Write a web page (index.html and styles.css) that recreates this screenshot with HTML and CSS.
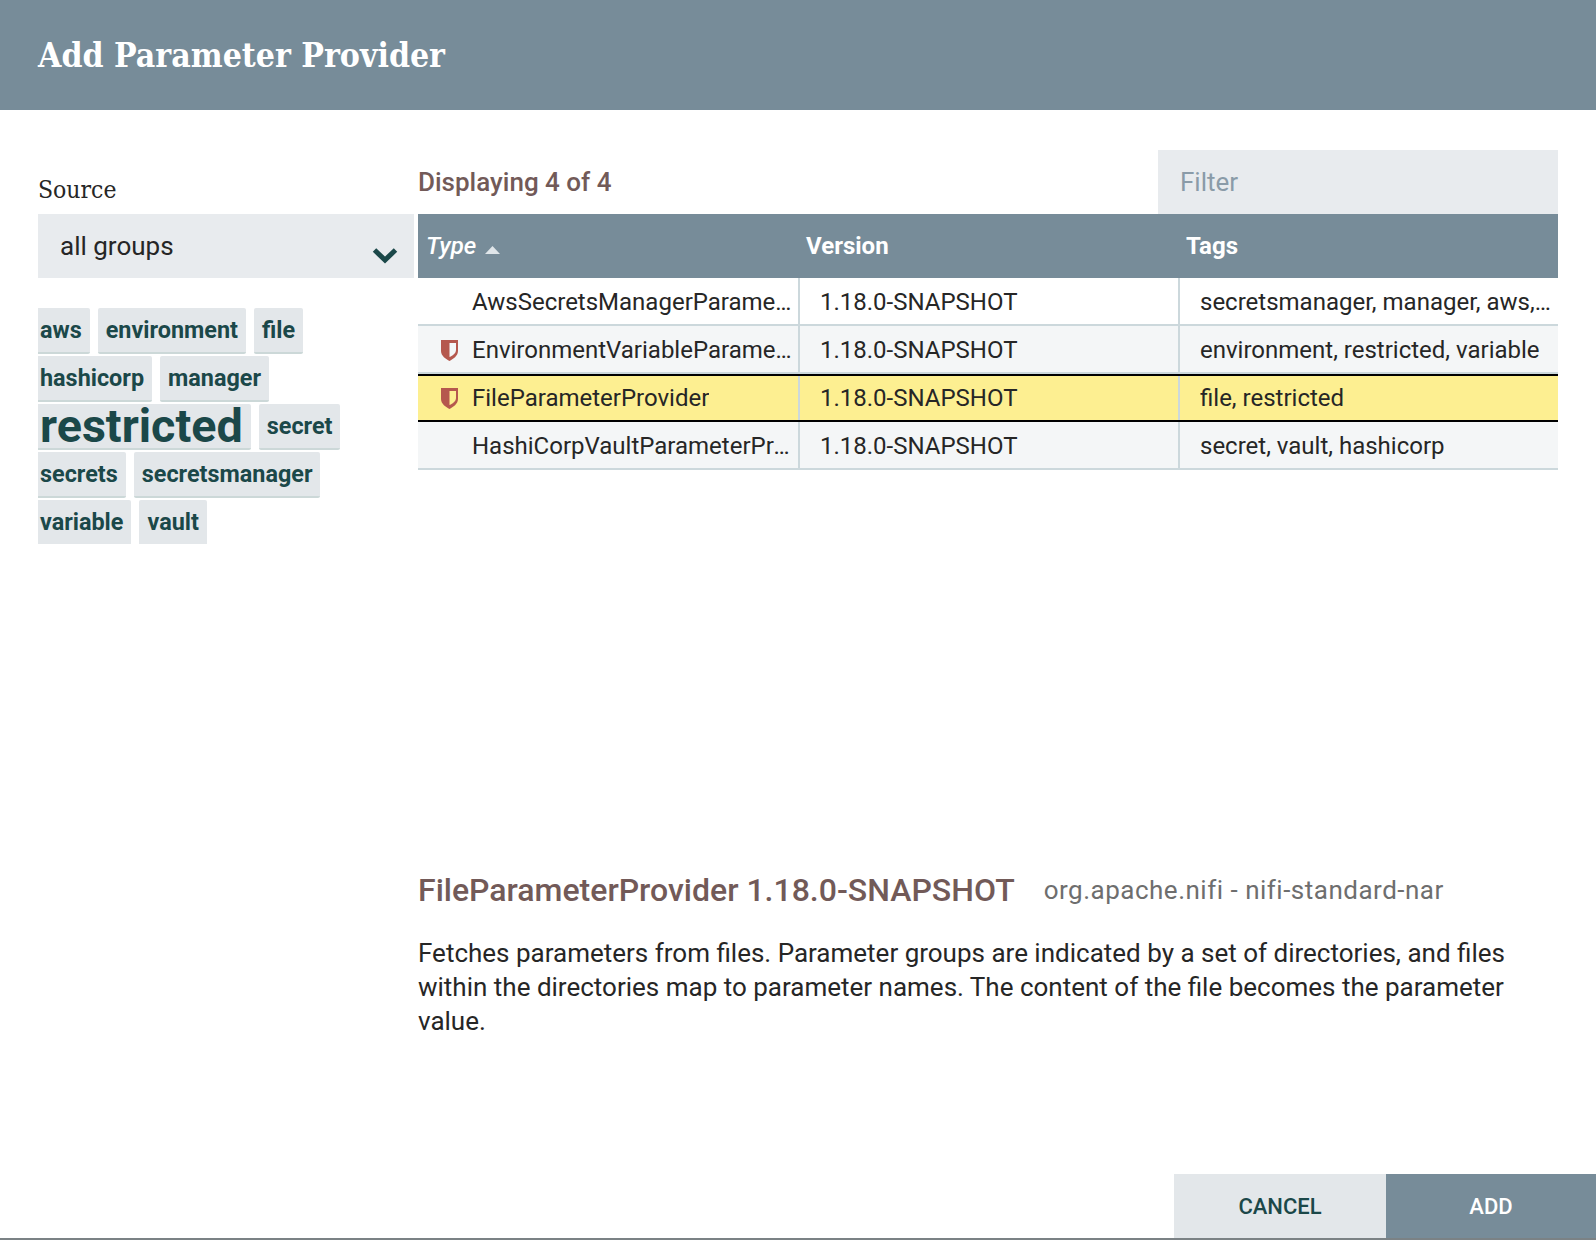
FILE: index.html
```html
<!DOCTYPE html>
<html lang="en">
<head>
  <meta charset="UTF-8" />
  <title>Add Parameter Provider</title>
  <link rel="stylesheet" href="styles.css">
</head>
<body>

<div class="dialog">
  <div class="dialog-header">Add Parameter Provider</div>

  <div class="dialog-content">
    <div class="side">
      <div class="source-label">Source</div>
      <div class="source-select">
        <span>all groups</span>
        <svg class="chevron" width="26" height="17" viewBox="0 0 26 17"><path d="M2.500 3 L13 13 L23.500 3" fill="none" stroke="#1b4849" stroke-width="5"/></svg>
      </div>
      <div class="tag-cloud">
        <div class="tag-list">
          <span class="tag">aws</span>
          <span class="tag">environment</span>
          <span class="tag">file</span>
          <span class="tag">hashicorp</span>
          <span class="tag">manager</span>
          <span class="tag tag-big">restricted</span>
          <span class="tag">secret</span>
          <span class="tag">secrets</span>
          <span class="tag">secretsmanager</span>
          <span class="tag">variable</span>
          <span class="tag">vault</span>
        </div>
      </div>
    </div>

    <div class="types">
      <div class="toolbar">
        <span class="displaying">Displaying 4 of 4</span>
        <div class="filter">Filter</div>
      </div>

      <div class="grid">
        <div class="grid-head">
          <div class="col-type sorted">Type <svg width="15" height="8" viewBox="0 0 15 8"><path d="M0 8 L7.500 0 L15 8 Z" fill="#dfe5e9"/></svg></div>
          <div class="col-version">Version</div>
          <div class="col-tags">Tags</div>
        </div>

        <div class="grid-row">
          <div class="cell cell-type"><span class="no-icon"></span><span class="clip">AwsSecretsManagerParameterProvider</span></div>
          <div class="cell cell-version">1.18.0-SNAPSHOT</div>
          <div class="cell cell-tags"><span class="clip">secretsmanager, manager, aws, secrets</span></div>
        </div>
        <div class="grid-row alt">
          <div class="cell cell-type"><svg class="shield" width="17" height="21" viewBox="0 0 17 21"><path fill-rule="evenodd" d="M0 0 H17 V11 C17 16 12 19 8.500 21 C5 19 0 16 0 11 Z M8.500 3 V17 C12 15.500 15 13 15 10 V3 Z" fill="#b5584e"/></svg><span class="clip">EnvironmentVariableParameterProvider</span></div>
          <div class="cell cell-version">1.18.0-SNAPSHOT</div>
          <div class="cell cell-tags"><span class="clip">environment, restricted, variable</span></div>
        </div>
        <div class="grid-row selected">
          <div class="cell cell-type"><svg class="shield" width="17" height="21" viewBox="0 0 17 21"><path fill-rule="evenodd" d="M0 0 H17 V11 C17 16 12 19 8.500 21 C5 19 0 16 0 11 Z M8.500 3 V17 C12 15.500 15 13 15 10 V3 Z" fill="#b5584e"/></svg><span class="clip">FileParameterProvider</span></div>
          <div class="cell cell-version">1.18.0-SNAPSHOT</div>
          <div class="cell cell-tags"><span class="clip">file, restricted</span></div>
        </div>
        <div class="grid-row alt">
          <div class="cell cell-type"><span class="no-icon"></span><span class="clip">HashiCorpVaultParameterProvider</span></div>
          <div class="cell cell-version">1.18.0-SNAPSHOT</div>
          <div class="cell cell-tags"><span class="clip">secret, vault, hashicorp</span></div>
        </div>
      </div>

      <div class="details">
        <div class="details-title">
          <span class="details-name">FileParameterProvider 1.18.0-SNAPSHOT</span>
          <span class="details-bundle">org.apache.nifi - nifi-standard-nar</span>
        </div>
        <p class="details-text">Fetches parameters from files. Parameter groups are indicated by a set of directories, and files within the directories map to parameter names. The content of the file becomes the parameter value.</p>
      </div>
    </div>
  </div>

  <div class="dialog-footer">
    <div class="btn btn-cancel">CANCEL</div>
    <div class="btn btn-add">ADD</div>
  </div>
</div>

</body>
</html>
```

FILE: styles.css
```css
html, body {
  margin: 0;
  padding: 0;
  background: #fff;
}

body {
  font-family: Roboto, sans-serif;
  color: #262626;
}

.dialog {
  height: 1240px;
  box-sizing: border-box;
  display: flex;
  flex-direction: column;
  border-bottom: 2px solid #7b8285;
  overflow: hidden;
}

.dialog-header {
  height: 110px;
  flex: none;
  box-sizing: border-box;
  padding-left: 38px;
  line-height: 112px;
  background: #778c99;
  color: #fff;
  font-family: "DejaVu Serif Condensed", "DejaVu Serif", serif;
  font-weight: bold;
  font-size: 33.500px;
}

.dialog-content {
  flex: 1;
  display: flex;
  gap: 4px;
  padding: 40px 38px 0;
}

/* left column */
.side {
  width: 376px;
  flex: none;
}

.source-label {
  height: 64px;
  box-sizing: border-box;
  padding-top: 24px;
  line-height: 32px;
  font-family: "DejaVu Serif Condensed", "DejaVu Serif", serif;
  font-size: 24.500px;
}

.source-select {
  height: 64px;
  box-sizing: border-box;
  padding: 0 16px 0 22px;
  display: flex;
  align-items: center;
  justify-content: space-between;
  background: #e8ebee;
  font-size: 26px;
}

.chevron {
  margin-top: 18px;
}

.tag-cloud {
  margin-top: 30px;
  height: 236px;
  overflow: hidden;
}

.tag-list {
  margin-left: -6px;
  display: flex;
  flex-wrap: wrap;
  gap: 2px 8px;
}

.tag {
  height: 46px;
  box-sizing: border-box;
  padding: 0 8px;
  line-height: 45px;
  background: #e3e7ea;
  border-bottom: 2px solid #ccd8d8;
  border-radius: 2px;
  color: #1b4849;
  font-size: 23.400px;
  font-weight: bold;
}

.tag-big {
  font-size: 46.700px;
  line-height: 44px;
}

/* right column */
.types {
  flex: 1;
  min-width: 0;
}

.toolbar {
  height: 64px;
  display: flex;
  justify-content: space-between;
  align-items: center;
}

.displaying {
  color: #725a58;
  font-size: 26px;
  font-weight: 500;
}

.filter {
  width: 400px;
  height: 64px;
  box-sizing: border-box;
  padding-left: 22px;
  line-height: 64px;
  background: #e8ebee;
  color: #8a9ba8;
  font-size: 26px;
}

.grid-head {
  height: 64px;
  display: flex;
  background: #778c99;
  color: #fff;
  font-size: 24px;
  font-weight: bold;
  line-height: 64px;
}

.col-type {
  width: 382px;
  box-sizing: border-box;
  padding-left: 8px;
}

.sorted {
  font-style: italic;
  font-weight: 500;
}

.sorted svg {
  margin-left: 3px;
}

.col-version, .col-tags {
  box-sizing: border-box;
  padding-left: 6px;
}

.col-version {
  width: 380px;
}

.grid-row {
  height: 48px;
  display: flex;
  box-sizing: border-box;
  border-bottom: 2px solid #ccd8dc;
  font-size: 24px;
}

.grid-row.alt {
  background: #f4f6f7;
}

.grid-row.selected {
  background: #fdef91;
  border-top: 2px solid #000;
  border-bottom: 2px solid #000;
}

.cell {
  display: flex;
  align-items: center;
  box-sizing: border-box;
  min-width: 0;
  padding-top: 2px;
}

.selected .cell {
  padding-top: 0;
}

.cell-type {
  width: 382px;
  padding-left: 23px;
  padding-right: 5px;
  border-right: 2px solid #ccd8dc;
}

.cell-version {
  width: 380px;
  padding-left: 20px;
  border-right: 2px solid #ccd8dc;
}

.cell-tags {
  flex: 1;
  padding-left: 20px;
  padding-right: 6px;
}

.shield, .no-icon {
  width: 17px;
  flex: none;
  margin-right: 14px;
}

.clip {
  overflow: hidden;
  white-space: nowrap;
  text-overflow: ellipsis;
}

/* selected type details */
.details {
  margin-top: 401px;
}

.details-title {
  display: flex;
  align-items: center;
  gap: 29px;
}

.details-name {
  color: #725a58;
  font-size: 32px;
  font-weight: 500;
}

.details-bundle {
  color: #6e6e6e;
  font-size: 26px;
  letter-spacing: 0.500px;
}

.details-text {
  margin: 27px 0 0;
  font-size: 26px;
  line-height: 34px;
}

.dialog-footer {
  flex: none;
  display: flex;
  justify-content: flex-end;
}

.btn {
  height: 64px;
  line-height: 66px;
  text-align: center;
  font-size: 22px;
  font-weight: 500;
}

.btn-cancel {
  width: 212px;
  background: #e3e7ea;
  color: #1b4849;
}

.btn-add {
  width: 210px;
  background: #778c99;
  color: #fff;
}
```
